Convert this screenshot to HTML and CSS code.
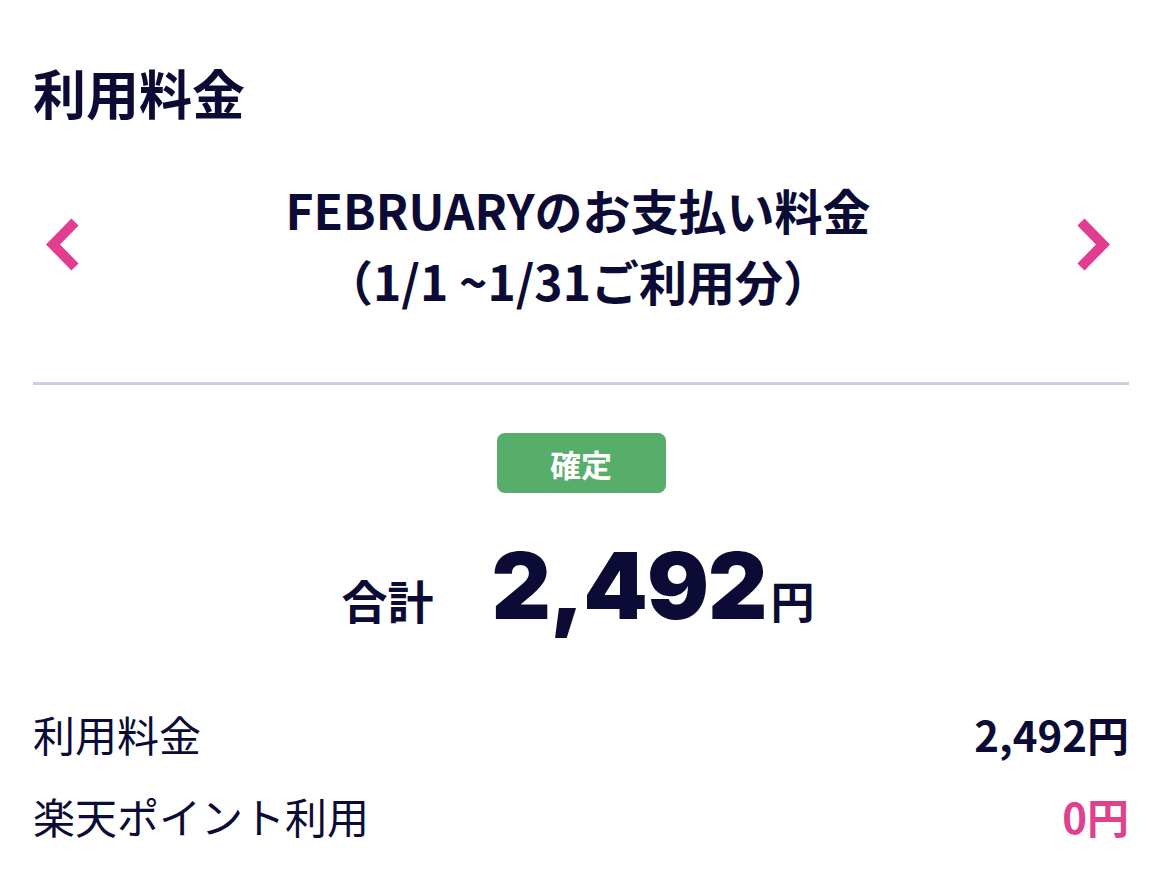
FILE: index.html
```html
<!DOCTYPE html>
<html lang="ja">
<head>
<meta charset="utf-8">
<link rel="stylesheet" href="styles.css">
</head>
<body>
<div class="page">
  <h1 class="title">利用料金</h1>
  <div class="nav">
    <button class="arrow" aria-label="前へ">
      <svg width="40" height="56" viewBox="0 0 40 56"><path d="M33 5 L11 27.5 L33 50" fill="none" stroke="#e23d8f" stroke-width="10"/></svg>
    </button>
    <div class="period">
      <div>FEBRUARYのお支払い料金</div>
      <div>（1/1 ~1/31ご利用分）</div>
    </div>
    <button class="arrow" aria-label="次へ">
      <svg width="40" height="56" viewBox="0 0 40 56"><path d="M7 5 L29 27.5 L7 50" fill="none" stroke="#e23d8f" stroke-width="10"/></svg>
    </button>
  </div>
  <hr class="divider">
  <div class="status"><span class="badge">確定</span></div>
  <div class="total">
    <span class="total-label">合計</span>
    <span class="total-num">2,492</span><span class="total-yen">円</span>
  </div>
  <div class="rows">
    <div class="row"><span>利用料金</span><span class="val">2,492円</span></div>
    <div class="row"><span>楽天ポイント利用</span><span class="val pink">0円</span></div>
  </div>
</div>
</body>
</html>
```
FILE: styles.css
```css
html, body { margin: 0; padding: 0; background: #fff; }
body {
  font-family: "Noto Sans CJK JP", "Noto Sans", sans-serif;
  color: #0c0b35;
}
.page { padding: 0 25px 0 33px; }
.title {
  margin: 0;
  padding-top: 58px;
  font-size: 53px;
  font-weight: 700;
  line-height: 68px;
}
.nav {
  display: flex;
  align-items: center;
  justify-content: space-between;
  margin-top: 48px;
  padding: 0 15px 0 9px;
}
.arrow {
  border: 0; background: none; padding: 0; width: 40px; height: 56px;
  display: flex; align-items: center; justify-content: center;
}
.period {
  text-align: center;
  font-size: 48px;
  font-weight: 700;
  line-height: 71px;
}
.divider {
  border: 0;
  height: 3px;
  background: #d0cde0;
  margin: 66px 0 0 0;
}
.status { display: flex; justify-content: center; margin-top: 48px; }
.badge {
  display: inline-flex; align-items: center; justify-content: center;
  width: 169px; height: 60px;
  background: #57ad6a; color: #fff;
  border-radius: 8px;
  font-size: 31px; font-weight: 700;
}
.total {
  display: flex; justify-content: center; align-items: baseline;
  margin-top: 38px;
  padding-left: 4px;
  padding-right: 10px;
}
.total-label { font-size: 46px; font-weight: 700; margin-right: 58px; }
.total-num {
  font-family: Inter, "Noto Sans", sans-serif;
  font-size: 92px; font-weight: 900; letter-spacing: -1px;
  line-height: 110px;
}
.total-yen { font-size: 44px; font-weight: 700; margin-left: 4px; }
.rows { margin-top: 52px; }
.row {
  display: flex; justify-content: space-between; align-items: center;
  font-size: 42px; line-height: 82px;
}
.val { font-weight: 700; }
.pink { color: #e0408e; }
```
